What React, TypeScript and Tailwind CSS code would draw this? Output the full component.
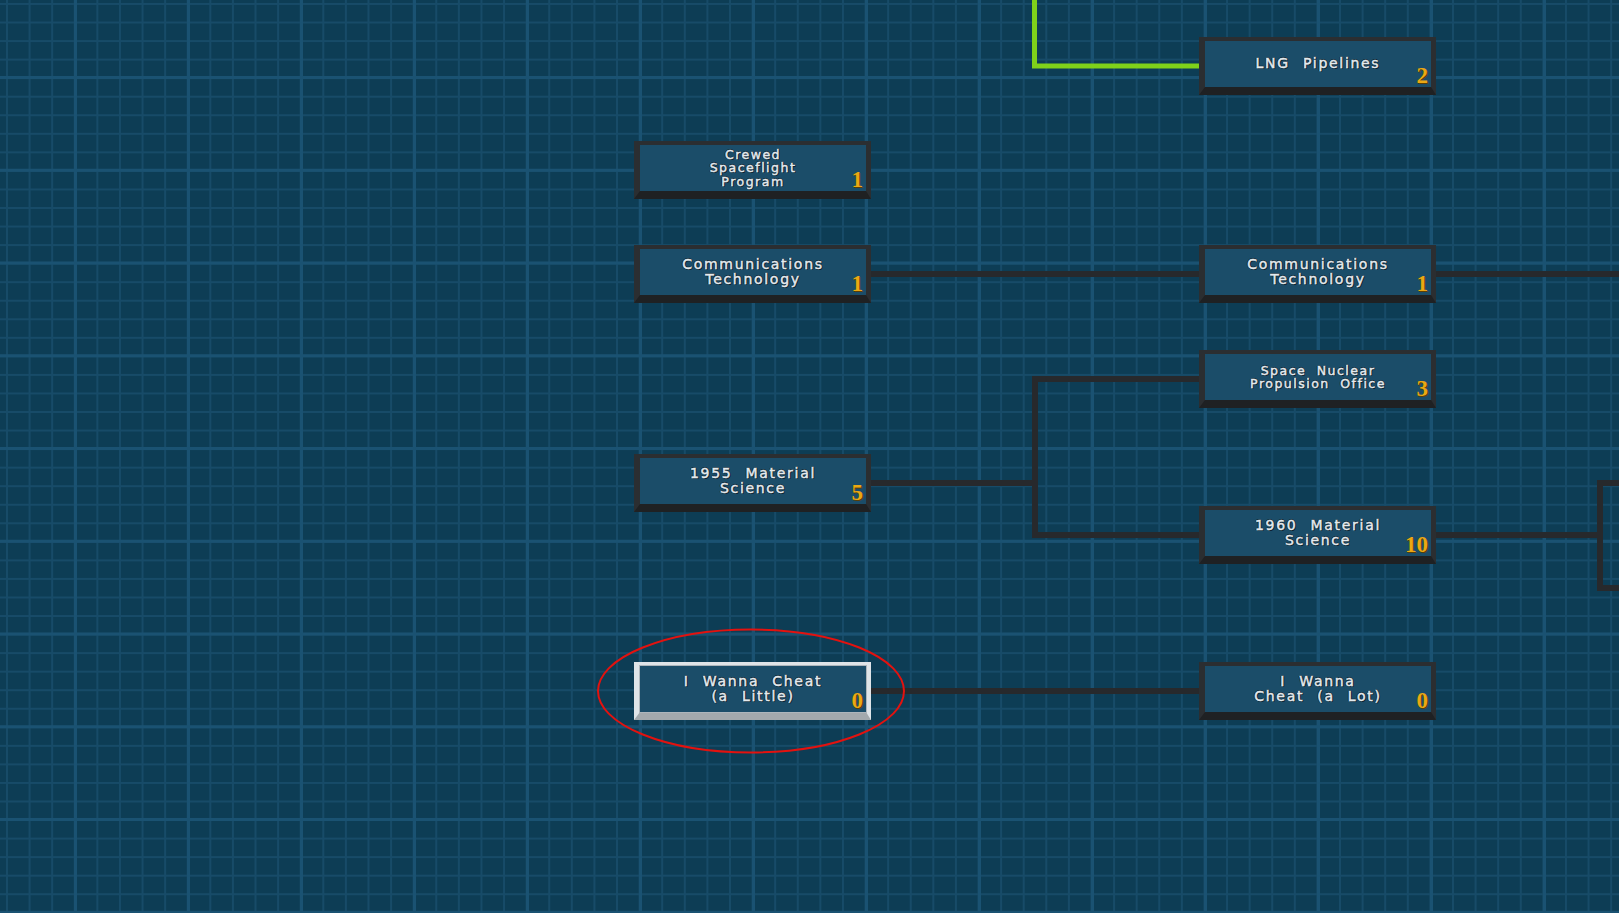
import React from "react";

type TechNode = {
  x: number;
  y: number;
  lines: string[];
  cost: string;
  small?: boolean;
  selected?: boolean;
};

const nodes: TechNode[] = [
  { x: 1199, y: 37, lines: ["LNG Pipelines"], cost: "2" },
  { x: 634, y: 141, lines: ["Crewed", "Spaceflight", "Program"], cost: "1", small: true },
  { x: 634, y: 245, lines: ["Communications", "Technology"], cost: "1" },
  { x: 1199, y: 245, lines: ["Communications", "Technology"], cost: "1" },
  { x: 1199, y: 350, lines: ["Space Nuclear", "Propulsion Office"], cost: "3", small: true },
  { x: 634, y: 454, lines: ["1955 Material", "Science"], cost: "5" },
  { x: 1199, y: 506, lines: ["1960 Material", "Science"], cost: "10" },
  { x: 634, y: 662, lines: ["I Wanna Cheat", "(a Little)"], cost: "0", selected: true },
  { x: 1199, y: 662, lines: ["I Wanna", "Cheat (a Lot)"], cost: "0" },
];

function Node({ node }: { node: TechNode }) {
  const frame = node.selected
    ? "border-[#dfe4e8] border-b-[#a3a9ad]"
    : "border-[#2b2e31] border-b-[#1f2123]";
  return (
    <div
      className={`absolute w-[237px] h-[58px] border-t-4 border-l-[6px] border-r-[5px] border-b-[8px] ${frame}`}
      style={{ left: node.x, top: node.y }}
    >
      <div
        className={`relative h-full w-full bg-[#1b4d69] flex flex-col items-center justify-center ${
          node.selected ? "outline outline-1 outline-[#aeb6bc]" : ""
        }`}
      >
        <div
          className={`text-center text-[#e4eaee] font-['DejaVu_Sans',sans-serif] [-webkit-text-stroke:0.45px_#e4eaee] [text-shadow:1px_1px_0_#0b2230,-1px_0_0_#0b2230,0_-1px_0_#0b2230,1px_0_0_#0b2230] ${
            node.small
              ? "text-[12.5px] leading-[13.5px] tracking-[1.5px] [word-spacing:5px]"
              : "text-[14px] leading-[15.5px] tracking-[1.7px] [word-spacing:7px]"
          }`}
        >
          {node.lines.map((l) => (
            <div key={l}>{l}</div>
          ))}
        </div>
        <span className="absolute right-[3px] bottom-0 leading-none text-[23px] font-bold text-[#eaa814] font-['Liberation_Serif',serif] [text-shadow:1px_1px_0_#5c3f04]">
          {node.cost}
        </span>
      </div>
    </div>
  );
}

export default function App() {
  return (
    <div className="relative w-[1619px] h-[913px] overflow-hidden bg-[#0d3d55] bg-[image:linear-gradient(to_right,#1a5272_0_3px,transparent_3px),linear-gradient(to_bottom,#1a5272_0_3px,transparent_3px),linear-gradient(to_right,#174b68_0_2px,transparent_2px),linear-gradient(to_bottom,#174b68_0_2px,transparent_2px)] bg-[size:113px_100%,100%_92.75px,22.6px_100%,100%_18.55px] bg-[position:74px_0,0_76px,6px_0,0_3px]">
      <svg className="absolute inset-0" width="1619" height="913">
        <g fill="none" stroke="#27292c" strokeWidth="6" strokeLinecap="square">
          <path d="M871 274 H1199" />
          <path d="M1436 274 H1625" />
          <path d="M871 483 H1035" />
          <path d="M1199 379 H1035 V535 H1199" />
          <path d="M1436 535 H1600" />
          <path d="M1625 483 H1600 V588 H1625" />
          <path d="M871 691 H1199" />
        </g>
        <path d="M1034.5 -5 V66 H1199" fill="none" stroke="#7fd21a" strokeWidth="5" />
      </svg>
      {nodes.map((n, i) => (
        <Node key={i} node={n} />
      ))}
      <svg className="absolute inset-0 pointer-events-none" width="1619" height="913">
        <ellipse cx="751" cy="691" rx="153" ry="61.5" fill="none" stroke="#e3120f" strokeWidth="2" />
      </svg>
    </div>
  );
}
